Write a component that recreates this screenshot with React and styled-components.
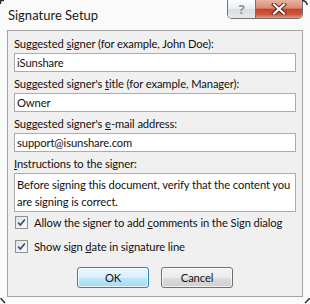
import React from "react";
import styled, { createGlobalStyle } from "styled-components";

const GlobalStyle = createGlobalStyle`
  body {
    margin: 0;
    background: #ffffff;
    font-family: Lato, "Noto Sans", sans-serif;
  }
`;

function Corner({ at }) {
  const paths = {
    tl: "M0.5 4 L0.5 0.5 L4 0.5",
    tr: "M0 0.5 Q4 0.5 5.5 5",
    bl: "M0.5 0 L5 5",
    br: "M8 0 L3 5",
  };
  return (
    <CornerMark at={at} width="8" height="6" viewBox="0 0 8 6">
      <path d={paths[at]} stroke="#2a2a2a" strokeWidth="1.4" fill="none" />
    </CornerMark>
  );
}

function Check() {
  return (
    <CheckBox>
      <svg width="9" height="9" viewBox="0 0 9 9">
        <path
          d="M1.2 4.6 L3.4 7 L7.8 1.4"
          stroke="#3b4b70"
          strokeWidth="1.6"
          fill="none"
        />
      </svg>
    </CheckBox>
  );
}

function App() {
  return (
    <>
      <GlobalStyle />
      <Window>
        <Corner at="tl" />
        <Corner at="tr" />
        <Corner at="bl" />
        <Corner at="br" />
        <TitleBar>
          <Title>Signature Setup</Title>
          <Caption>
            <HelpButton>?</HelpButton>
            <CloseButton>
              <svg width="16" height="12" viewBox="0 0 16 12">
                <path
                  d="M3 1.5 L13 10.5 M13 1.5 L3 10.5"
                  stroke="#5a1f14"
                  strokeWidth="4"
                  strokeLinecap="square"
                />
                <path
                  d="M3 1.5 L13 10.5 M13 1.5 L3 10.5"
                  stroke="#ffffff"
                  strokeWidth="2.2"
                  strokeLinecap="square"
                />
              </svg>
            </CloseButton>
          </Caption>
        </TitleBar>

        <Panel>
          <Field>
            <Label>
              Suggested <u>s</u>igner (for example, John Doe):
            </Label>
            <TextBox>iSunshare</TextBox>
          </Field>
          <Field>
            <Label>
              Suggested signer's <u>t</u>itle (for example, Manager):
            </Label>
            <TextBox>Owner</TextBox>
          </Field>
          <Field>
            <Label>
              Suggested signer's <u>e</u>-mail address:
            </Label>
            <TextBox>support@isunshare.com</TextBox>
          </Field>
          <Field>
            <Label>
              <u>I</u>nstructions to the signer:
            </Label>
            <TextBox multiline>
              Before signing this document, verify that the content you
              <br />
              are signing is correct.
            </TextBox>
          </Field>

          <CheckList>
            <CheckRow>
              <Check />
              <span>
                Allow the signer to add <u>c</u>omments in the Sign dialog
              </span>
            </CheckRow>
            <CheckRow>
              <Check />
              <span>
                Show sign <u>d</u>ate in signature line
              </span>
            </CheckRow>
          </CheckList>

          <ButtonRow>
            <DialogButton primary>OK</DialogButton>
            <DialogButton>Cancel</DialogButton>
          </ButtonRow>
        </Panel>
      </Window>
    </>
  );
}

const Window = styled.div`
  position: relative;
  width: 310px;
  height: 304px;
  background: #fafafa;
  display: flex;
  flex-direction: column;
  overflow: hidden;
  color: #111111;
`;

const CornerMark = styled.svg`
  position: absolute;
  ${({ at }) => (at[0] === "t" ? "top: 0;" : "bottom: 0;")}
  ${({ at }) => (at[1] === "l" ? "left: 0;" : "right: 0;")}
`;

const TitleBar = styled.div`
  height: 30px;
  flex-shrink: 0;
  display: flex;
  justify-content: space-between;
  align-items: flex-start;
`;

const Title = styled.div`
  padding: 7px 0 0 8px;
  font-size: 13px;
  color: #1a1a1a;
`;

const Caption = styled.div`
  display: flex;
  height: 19px;
  margin-right: 7px;
  border: 1px solid #6e7276;
  border-top: none;
  border-radius: 0 0 5px 5px;
  overflow: hidden;
  box-sizing: border-box;
`;

const HelpButton = styled.div`
  width: 27px;
  display: flex;
  align-items: center;
  justify-content: center;
  font-family: "Noto Sans", sans-serif;
  font-size: 13px;
  font-weight: bold;
  color: #8d949b;
  background: linear-gradient(#fdfdfd 0%, #e9ecef 50%, #d8dde2 51%, #e6eaee 100%);
  border-right: 1px solid #6e7276;
`;

const CloseButton = styled.div`
  width: 46px;
  display: flex;
  align-items: center;
  justify-content: center;
  background: linear-gradient(
    #eab3a3 0%,
    #d98a72 45%,
    #c6432a 52%,
    #d0563b 80%,
    #e19a80 100%
  );
`;

const Panel = styled.div`
  flex: 1;
  margin: 0 7px 7px;
  padding: 5px 6px 0;
  background: #f0f0f0;
  border: 1px solid #a3a3a3;
  display: flex;
  flex-direction: column;
  font-size: 11.2px;
  letter-spacing: -0.1px;
`;

const Field = styled.div`
  display: flex;
  flex-direction: column;
  margin-bottom: 4px;
`;

const Label = styled.div`
  line-height: 15px;
  margin-bottom: 2px;
  white-space: nowrap;
`;

const TextBox = styled.div`
  box-sizing: border-box;
  height: ${({ multiline }) => (multiline ? "39px" : "19px")};
  padding: ${({ multiline }) => (multiline ? "2px 2px" : "0 2px")};
  line-height: 17px;
  white-space: nowrap;
  background: #ffffff;
  border: 1px solid #a9abaf;
`;

const CheckList = styled.div`
  display: flex;
  flex-direction: column;
  gap: 8px;
  margin-top: -2px;
`;

const CheckRow = styled.div`
  display: flex;
  align-items: center;
  gap: 6px;
  height: 16px;
  padding-left: 1px;
  white-space: nowrap;
`;

const CheckBox = styled.div`
  box-sizing: border-box;
  width: 13px;
  height: 13px;
  border: 1px solid #8f8f8f;
  background: linear-gradient(135deg, #dfe4ec, #f7f8fa);
  display: flex;
  align-items: center;
  justify-content: center;
`;

const ButtonRow = styled.div`
  display: flex;
  justify-content: center;
  gap: 12px;
  margin-top: 13px;
`;

const DialogButton = styled.div`
  box-sizing: border-box;
  width: 72px;
  height: 21px;
  display: flex;
  align-items: center;
  justify-content: center;
  border-radius: 3px;
  border: 1px solid ${({ primary }) => (primary ? "#3c7fb1" : "#707070")};
  background: ${({ primary }) =>
    primary
      ? "linear-gradient(#eaf6fd 0%, #d9f0fc 50%, #bee6fd 51%, #a7d9f5 100%)"
      : "linear-gradient(#f2f2f2 0%, #ebebeb 50%, #dddddd 51%, #cfcfcf 100%)"};
  box-shadow: inset 0 0 0 1px rgba(255, 255, 255, 0.7);
`;

export default App;
